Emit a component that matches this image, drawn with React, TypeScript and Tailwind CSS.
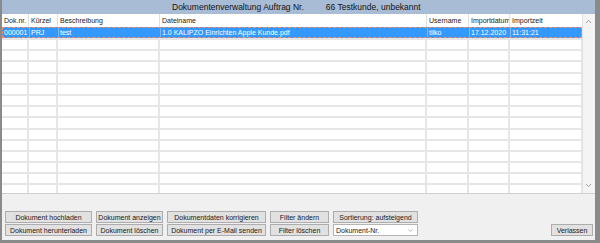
import { ChevronDown, ChevronUp } from 'lucide-react'

type Column = {
  title: string
  width: string
}

const columns: Column[] = [
  { title: 'Dok.nr.', width: 'w-[27px]' },
  { title: 'Kürzel', width: 'w-[29px]' },
  { title: 'Beschreibung', width: 'w-[102px]' },
  { title: 'Dateiname', width: 'w-[267px]' },
  { title: 'Username', width: 'w-[42px]' },
  { title: 'Importdatum', width: 'w-[41px]' },
  { title: 'Importzeit', width: 'w-[73px]' },
]

const selected = ['000001', 'PRJ', 'test', '1.0 KALIPZO Einrichten Apple Kunde.pdf', 'tilko', '17.12.2020', '11:31:21']

const emptyRows = Array.from({ length: 14 })

function Button({ label, className = '' }: { label: string, className?: string }) {
  return (
    <div className={'flex h-[12px] items-center justify-center border border-[#adadad] bg-[#e1e1e1] text-[7px] leading-none text-[#1a1a1a] ' + className}>
      {label}
    </div>
  )
}

export default function App() {
  return (
    <div className="flex h-[243px] w-[600px] flex-col border-b-[3px] border-l-2 border-r-[5px] border-[#8a8a8a] bg-[#f0f0f0] font-['Liberation_Sans',sans-serif]">
      <div className="flex h-[14px] shrink-0 items-center bg-[#a9bcd5] pl-[170px] text-[8.5px] leading-none text-[#111]">
        <span>Dokumentenverwaltung Auftrag Nr.</span>
        <span className="ml-[22px]">66 Testkunde, unbekannt</span>
      </div>

      <div className="grid h-[180px] shrink-0 grid-cols-[580px_13px] border-b border-[#d0d0d0] bg-white">
        <div className="flex flex-col overflow-hidden">
          <div className="flex h-[13px] shrink-0">
            {columns.map(col => (
              <div key={col.title} className={'flex shrink-0 items-center overflow-hidden whitespace-nowrap border-r border-[#e0e0e0] pl-[2px] text-[7px] leading-none text-[#222] ' + col.width}>
                {col.title}
              </div>
            ))}
          </div>

          <div className="flex h-[11px] shrink-0 border border-dashed border-[#f08a6a] bg-[#3399ff]">
            {columns.map((col, i) => (
              <div key={col.title} className={'flex shrink-0 items-center overflow-hidden whitespace-nowrap border-r border-[#7fb8f5] pl-[1px] text-[7px] leading-none text-white ' + col.width}>
                {selected[i]}
              </div>
            ))}
          </div>

          {emptyRows.map((_, r) => (
            <div key={r} className="flex h-[11.2px] shrink-0 border-t-2 border-[#e6e6e6]">
              {columns.map(col => (
                <div key={col.title} className={'shrink-0 border-r-2 border-[#e6e6e6] ' + col.width} />
              ))}
            </div>
          ))}
        </div>

        <div className="flex flex-col items-center justify-between border-l border-[#e0e0e0] bg-[#f4f4f4] py-[3px] pr-[2px]">
          <ChevronUp size={9} strokeWidth={2} color="#808080" />
          <ChevronDown size={9} strokeWidth={2} color="#808080" />
        </div>
      </div>

      <div className="flex flex-1 items-end justify-between pb-[4px] pl-[3px] pr-[2px]">
        <div className="flex gap-[4px]">
          <div className="flex flex-col gap-[1px]">
            <Button label="Dokument hochladen" className="w-[87px]" />
            <Button label="Dokument herunterladen" className="w-[87px]" />
          </div>
          <div className="flex flex-col gap-[1px]">
            <Button label="Dokument anzeigen" className="w-[67px]" />
            <Button label="Dokument löschen" className="w-[67px]" />
          </div>
          <div className="flex flex-col gap-[1px]">
            <Button label="Dokumentdaten korrigieren" className="w-[99px]" />
            <Button label="Dokument per E-Mail senden" className="w-[99px]" />
          </div>
          <div className="flex flex-col gap-[1px]">
            <Button label="Filter ändern" className="w-[59px]" />
            <Button label="Filter löschen" className="w-[59px]" />
          </div>
          <div className="flex flex-col gap-[1px]">
            <Button label="Sortierung: aufsteigend" className="w-[85px]" />
            <div className="flex h-[12px] w-[85px] items-center justify-between border border-[#b4b4b4] bg-white pl-[2px] pr-[3px] text-[7px] leading-none text-[#1a1a1a]">
              <span>Dokument-Nr.</span>
              <ChevronDown size={7} strokeWidth={1.5} color="#555" />
            </div>
          </div>
        </div>

        <Button label="Verlassen" className="w-[42px]" />
      </div>
    </div>
  )
}
